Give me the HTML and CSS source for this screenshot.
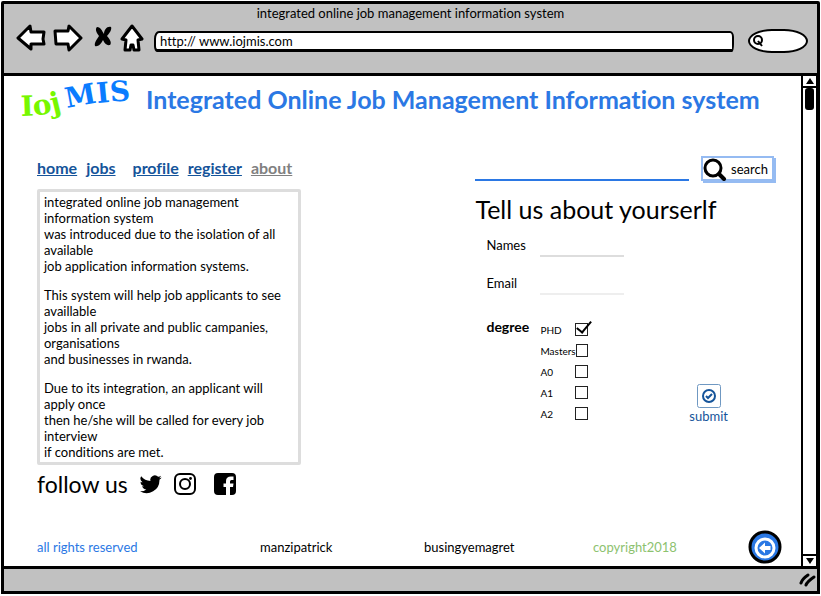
FILE: index.html
```html
<!DOCTYPE html>
<html lang="en">
<head>
<meta charset="utf-8">
<title>integrated online job management information system</title>
<link rel="stylesheet" href="styles.css">
</head>
<body>
<div class="window">
  <header class="chrome">
    <div class="chrome-title">integrated online job management information system</div>
    <div class="toolbar">
      <button class="tool" type="button" aria-label="Back"><svg width="30" height="28" viewBox="0 0 30 28"><path class="outline" d="M2 14 L14 2 L15 8 L28 8 L27 15 L28 20 L15 20 L15 25 Z"/></svg></button>
      <button class="tool" type="button" aria-label="Forward"><svg width="30" height="28" viewBox="0 0 30 28"><path class="outline" d="M28 14 L16 2 L15 7 L2 7 L3 20 L15 20 L16 26 Z"/></svg></button>
      <button class="tool tool-stop" type="button" aria-label="Stop"><svg width="18" height="28" viewBox="0 0 18 28"><path d="M3 3 C7 3 8 7 10 10 C10 6 13 2 17 3 C18 5 16 9 13 12 C16 15 18 19 16 21 C12 22 10 18 9 16 C7 20 4 23 1 22 C0 19 3 15 5 12 C2 8 1 5 3 3 Z"/></svg></button>
      <button class="tool" type="button" aria-label="Home"><svg width="24" height="28" viewBox="0 0 24 28"><path class="outline" d="M12 2 L22 15 L18 16 L19 26 L14 26 L13 21 L11 21 L10 26 L5 26 L6 16 L2 15 Z"/></svg></button>
      <input class="address" type="text" aria-label="Address" value="http:// www.iojmis.com">
      <div class="quick">
        <svg width="12" height="14" viewBox="0 0 12 14"><circle cx="6" cy="6" r="4" fill="none" stroke="#000" stroke-width="2"/><path d="M6 7 L10 12" stroke="#000" stroke-width="2" fill="none"/></svg>
        <input type="search" aria-label="Quick search">
      </div>
    </div>
  </header>

  <div class="viewport">
    <div class="page">
      <div class="brand">
        <svg class="logo" width="116" height="44" viewBox="0 0 116 44" aria-label="IojMIS">
          <defs><path id="low" d="M1 38 C18 38 34 36 54 29"/><path id="high" d="M47 31 C64 25 86 24 130 21"/></defs>
          <text class="logo-low"><textPath href="#low">Ioj</textPath></text>
          <text class="logo-high"><textPath href="#high">MIS</textPath></text>
        </svg>
        <h1>Integrated Online Job Management Information system</h1>
      </div>

      <main class="columns">
        <section class="info">
          <nav class="menu">
            <a href="#home">home</a>
            <a href="#jobs">jobs</a>
            <a class="spaced" href="#profile">profile</a>
            <a href="#register">register</a>
            <a class="current" href="#about">about</a>
          </nav>
          <div class="about">
            <p>integrated online job management<br>information system<br>was introduced due to the isolation of all<br>available<br>job application information systems.</p>
            <p>This system will help job applicants to see<br>availlable<br>jobs in all private and public campanies,<br>organisations<br>and businesses in rwanda.</p>
            <p>Due to its integration, an applicant will<br>apply once<br>then he/she will be called for every job<br>interview<br>if conditions are met.</p>
          </div>
          <div class="follow">
            <span>follow us</span>
            <a href="#twitter" aria-label="Twitter"><svg width="22" height="22" viewBox="0 0 24 24"><path d="M23.6 4.9a9.6 9.6 0 0 1-2.8.8 4.9 4.9 0 0 0 2.1-2.7 9.800 9.800 0 0 1-3.100 1.200 4.900 4.900 0 0 0-8.400 4.500A14 14 0 0 1 1.300 3.500a4.900 4.900 0 0 0 1.500 6.600 4.900 4.900 0 0 1-2.200-.6v.1a4.900 4.900 0 0 0 3.900 4.800 5 5 0 0 1-2.200.1 4.900 4.900 0 0 0 4.600 3.400A9.900 9.900 0 0 1 0 19.900 14 14 0 0 0 21.200 7.400a10 10 0 0 0 2.400-2.500z"/></svg></a>
            <a href="#instagram" aria-label="Instagram"><svg width="22" height="22" viewBox="0 0 22 22"><rect x="1" y="1" width="20" height="20" rx="5" fill="none" stroke="#000" stroke-width="2"/><circle cx="11" cy="11" r="5" fill="none" stroke="#000" stroke-width="2"/><circle cx="16.500" cy="5.500" r="1.400"/></svg></a>
            <a class="facebook" href="#facebook" aria-label="Facebook"><svg width="22" height="22" viewBox="0 0 22 22"><path d="M4 0 H18 Q22 0 22 4 V18 Q22 22 18 22 H16 V14 H19 L19.500 10.500 H16 V8.500 Q16 7 17.500 7 H19.500 V3.500 H17 Q12 3.500 12 8 V10.500 H9.500 V14 H12 V22 H4 Q0 22 0 18 V4 Q0 0 4 0 Z"/></svg></a>
          </div>
        </section>

        <section class="side">
          <form class="search">
            <input type="text" aria-label="Search jobs">
            <button type="button"><svg width="24" height="24" viewBox="0 0 24 24"><circle cx="10" cy="11" r="8" fill="#fff" stroke="#000" stroke-width="3"/><path d="M16 17 L21 22" stroke="#000" stroke-width="4" stroke-linecap="round"/></svg><span>search</span></button>
          </form>
          <h2>Tell us about yourserlf</h2>
          <form class="apply">
            <div class="field"><label for="names">Names</label><input id="names" type="text"></div>
            <div class="field faint"><label for="email">Email</label><input id="email" type="text"></div>
            <div class="lower">
              <fieldset>
                <legend>degree</legend>
                <label><span>PHD</span><input type="checkbox" checked></label>
                <label><span>Masters</span><input type="checkbox"></label>
                <label><span>A0</span><input type="checkbox"></label>
                <label><span>A1</span><input type="checkbox"></label>
                <label><span>A2</span><input type="checkbox"></label>
              </fieldset>
              <button class="submit" type="button"><svg width="24" height="24" viewBox="0 0 24 24"><rect x="0.500" y="0.500" width="23" height="23" rx="2" fill="#fff" stroke="#6f98c2"/><circle cx="12" cy="12" r="6" fill="none" stroke="#15549a" stroke-width="2"/><path d="M9 12 L11 14 L15 10" fill="none" stroke="#15549a" stroke-width="2"/></svg><span>submit</span></button>
            </div>
          </form>
        </section>
      </main>

      <footer class="credits">
        <span class="rights">all rights reserved</span>
        <span>manzipatrick</span>
        <span>busingyemagret</span>
        <span class="copy">copyright2018</span>
        <button type="button" aria-label="Previous page"><svg width="34" height="34" viewBox="0 0 34 34"><circle cx="17" cy="17" r="15" fill="#2b78e4" stroke="#000" stroke-width="3"/><circle cx="17" cy="18" r="9" fill="#2b78e4" stroke="#fff" stroke-width="3"/><path d="M11 18 L17 12.500 V16 H22.500 V20 H17 V23.500 Z" fill="#fff"/></svg></button>
      </footer>
    </div>
    <div class="scroll">
      <button type="button" aria-label="Scroll up"><svg width="8" height="6" viewBox="0 0 8 6"><path d="M4 0 L8 6 H0 Z"/></svg></button>
      <div class="thumb"></div>
      <button type="button" aria-label="Scroll down"><svg width="8" height="6" viewBox="0 0 8 6"><path d="M0 0 H8 L4 6 Z"/></svg></button>
    </div>
  </div>

  <div class="status"><svg width="18" height="14" viewBox="0 0 18 14"><path d="M2 10 C3 7 6 4 9 2 M7 12 C8 9 12 6 15 4" fill="none" stroke="#000" stroke-width="3" stroke-linecap="round"/></svg></div>
</div>
</body>
</html>
```
FILE: styles.css
```css
* { box-sizing: border-box; }

body {
  margin: 0;
  background: #fff;
  color: #000;
  font: 13px/16px Lato, "Liberation Sans", sans-serif;
  font-variant-ligatures: none;
}

button, input { font: inherit; color: inherit; }
button { padding: 0; border: 0; background: none; }
input { min-width: 0; padding: 0; border: 0; outline: 0; background: none; }
svg { display: block; flex: none; }
h1, h2, p, fieldset, legend { margin: 0; padding: 0; border: 0; }

.window {
  display: flex;
  flex-direction: column;
  min-height: 100vh;
  padding: 1px 1px 2px;
}
.chrome, .viewport, .status { border: 3px solid #000; }

.chrome { background: #c1c1c1; padding-bottom: 20px; border-radius: 2px 2px 0 0; }
.chrome-title { text-align: center; line-height: 19px; }
.toolbar { display: flex; align-items: center; padding: 0 9px 0 12px; }
.tool { margin-right: 7px; }
.tool-stop { margin: 0 8px 0 4px; }
.outline { fill: #fff; stroke: #000; stroke-width: 3; stroke-linejoin: round; }
.address {
  flex: 1;
  height: 21px;
  margin: 6px 14px 0 3px;
  padding-left: 4px;
  border: 2px solid #000;
  border-bottom-width: 3px;
  border-radius: 5px 4px 2px 3px / 8px 6px 8px 6px;
  background: #fff;
}
.quick {
  display: flex;
  align-items: center;
  width: 60px;
  height: 24px;
  margin-top: 6px;
  padding-left: 2px;
  border: 2px solid #000;
  border-radius: 24px / 12px;
  background: #fff;
}
.quick input { width: 36px; }

.viewport { flex: 1; display: flex; border-top: 0; border-bottom: 0; }
.page { flex: 1; display: flex; flex-direction: column; padding: 0 24px 2px 16px; }

.brand { display: flex; align-items: center; gap: 10px; padding-top: 2px; }
.logo { overflow: visible; }
.logo text { font: bold 28px "DejaVu Serif", serif; }
.logo-low { fill: #77f700; }
.logo-high { fill: #0a7cff; }
h1 { flex: 1; color: #2b78e4; font-size: 25px; line-height: 30px; padding-bottom: 2px; white-space: nowrap; }

.columns {
  display: grid;
  grid-template-columns: minmax(0, 264fr) minmax(0, 301fr);
  column-gap: 174px;
  padding: 34px 0 0 17px;
}

.menu { display: flex; gap: 9px; height: 33px; padding-top: 3px; }
.menu a { height: 18px; color: #15549a; font-size: 16px; font-weight: bold; line-height: 18px; }
.menu .spaced { margin-left: 8px; }
.menu .current { color: #808080; }
.about { border: 3px solid #ddd; border-radius: 2px; padding: 2px 4px; white-space: nowrap; }
.about p + p { margin-top: 13px; }
.follow { display: flex; align-items: center; gap: 12px; padding-top: 5px; }
.follow span { font-size: 23px; line-height: 28px; }
.follow .facebook { margin-left: 6px; }

.search { display: flex; justify-content: space-between; gap: 12px; }
.search input { flex: 1; height: 25px; border-bottom: 2px solid #2b78e4; }
.search button {
  display: flex;
  align-items: center;
  gap: 4px;
  height: 25px;
  padding-right: 4px;
  border: 2px solid #95bbf2;
  box-shadow: 2px 2px #95bbf2;
  margin-right: 3px;
  background: #fff;
}
h2 { padding-top: 14px; font-size: 25px; font-weight: normal; line-height: 28px; }

.apply { padding: 14px 0 0 11px; }
.field { display: flex; height: 38px; }
.field label { width: 54px; }
.field input { width: 84px; height: 20px; border-bottom: 2px solid #ddd; }
.faint input { border-color: #eee; }
.lower { display: flex; justify-content: space-between; padding-top: 6px; }
fieldset { min-width: 0; width: 102px; padding-left: 54px; }
legend { float: left; width: 54px; margin-left: -54px; font-size: 14px; font-weight: bold; }
fieldset label { display: flex; align-items: center; justify-content: space-between; height: 21px; font-size: 10px; }
fieldset input {
  appearance: none;
  width: 13px;
  height: 13px;
  margin: 0;
  border: 1px solid #222;
  background: #fff;
}
fieldset input:checked { position: relative; }
fieldset input:checked::after {
  content: "";
  position: absolute;
  left: 4px;
  bottom: 2px;
  width: 6px;
  height: 13px;
  border: solid #000;
  border-width: 0 2px 2px 0;
  transform: rotate(40deg);
}
.submit {
  display: flex;
  flex-direction: column;
  align-items: center;
  align-self: flex-start;
  margin: 65px 49px 0 0;
  color: #15549a;
}

.credits {
  display: grid;
  grid-template-columns: 223fr 164fr 169fr 155fr auto;
  align-items: center;
  margin-top: auto;
  margin-right: -5px;
  padding-left: 17px;
}
.rights { color: #2b78e4; }
.copy { color: #8dc26f; }

.scroll { display: flex; flex-direction: column; width: 16px; border: solid #000; border-width: 0 1px 0 2px; }
.scroll button { display: flex; align-items: center; justify-content: center; height: 12px; border-bottom: 2px solid #000; }
.scroll button:last-child { margin-top: auto; border-top: 2px solid #000; border-bottom: 0; }
.thumb { width: 9px; height: 22px; margin: 0 2px; border-radius: 3px; background: #000; }

.status { display: flex; align-items: center; justify-content: flex-end; height: 28px; background: #c1c1c1; }
```
